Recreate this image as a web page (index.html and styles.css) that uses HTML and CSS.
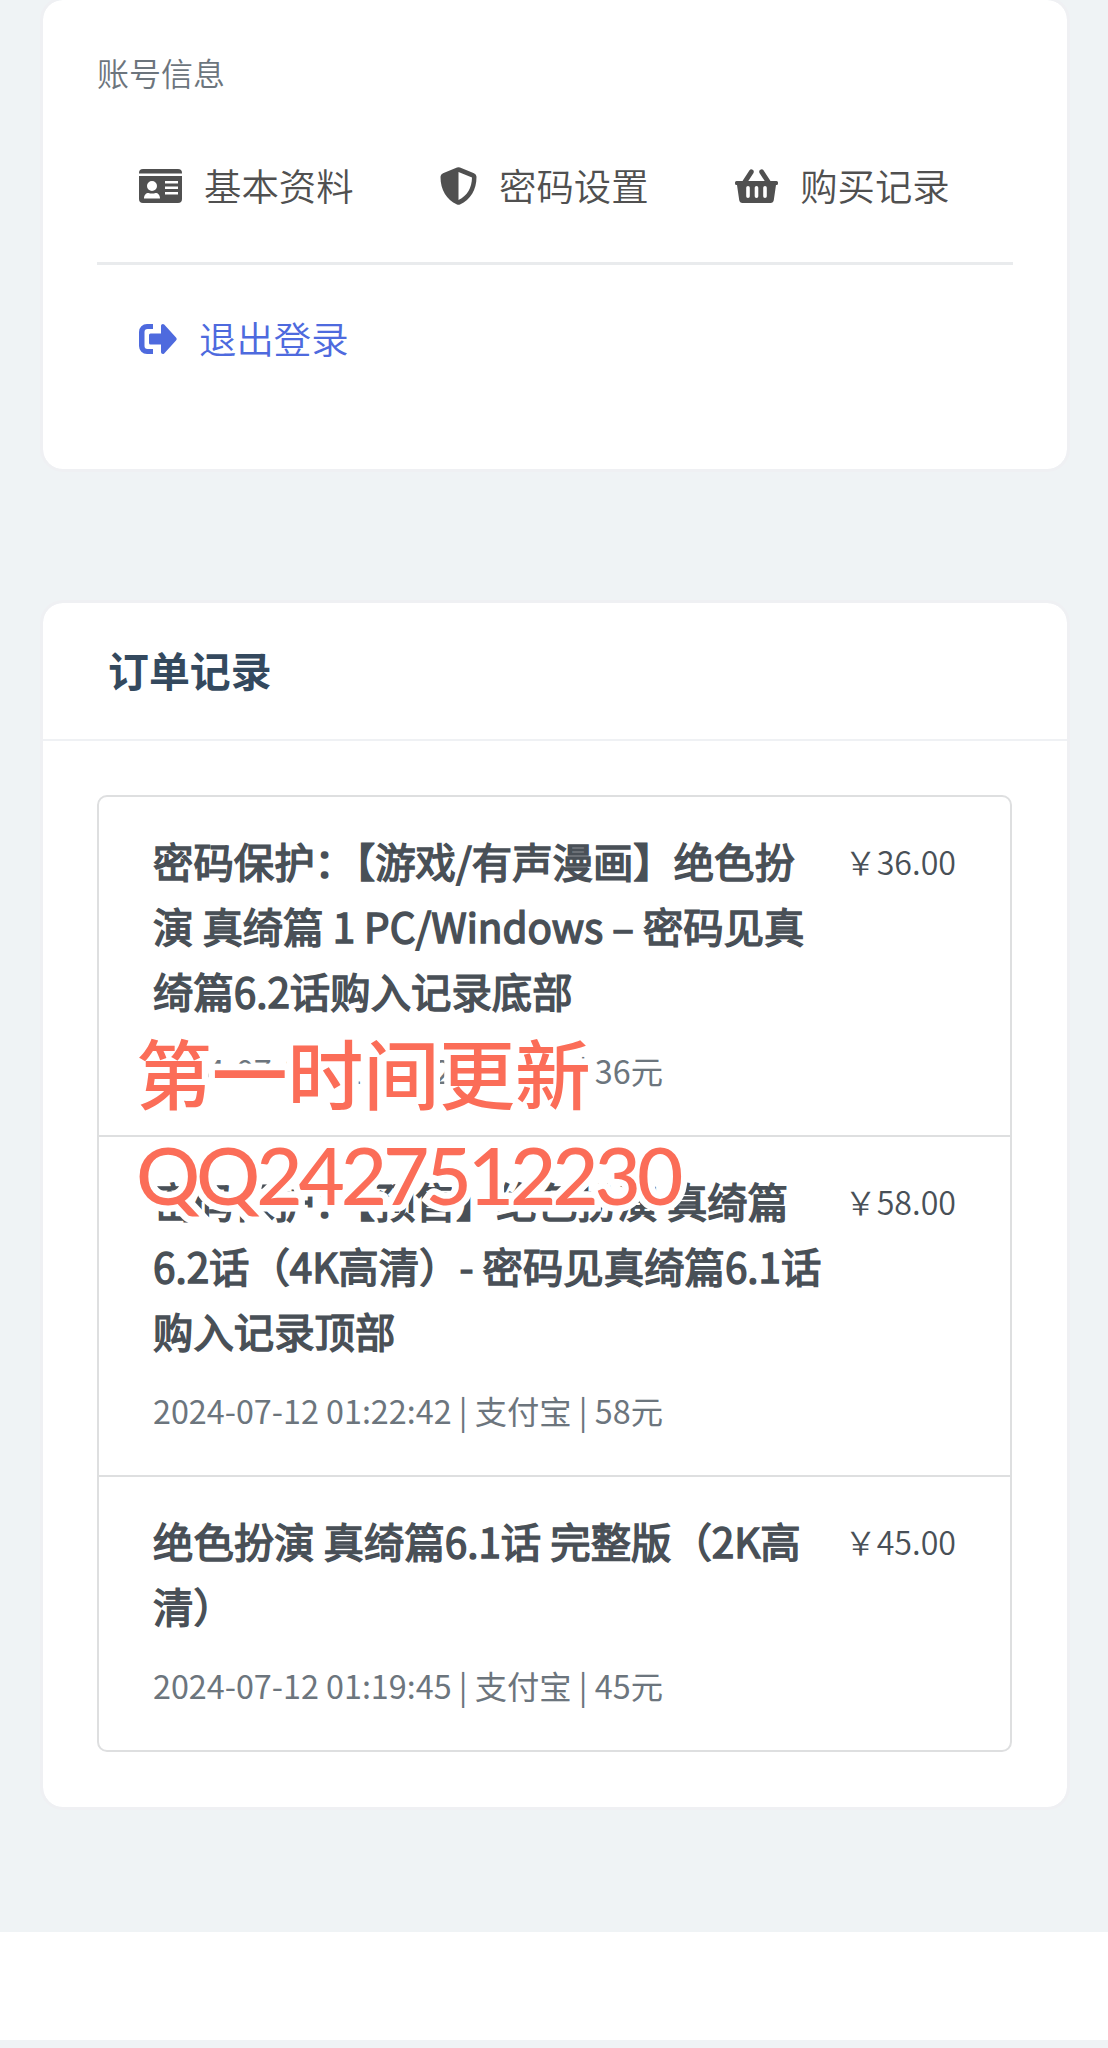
FILE: index.html
```html
<!DOCTYPE html>
<html lang="zh-CN">
<head>
    <meta charset="UTF-8">
    <meta name="viewport" content="width=device-width, initial-scale=1.0">
    <title>订单记录</title>
    <link rel="stylesheet" href="styles.css">
</head>
<body>
    <main class="page">
        <section class="card account">
            <h2 class="account-title">账号信息</h2>
            <nav class="account-nav">
                <a class="nav-item" href="#">
                    <svg width="43" height="34" viewBox="0 0 43 34" fill="currentColor">
                        <path d="M0 4.500V4a4 4 0 0 1 4-4h35a4 4 0 0 1 4 4v.5z"/>
                        <path fill-rule="evenodd" d="M0 7h43v23a4 4 0 0 1-4 4H4a4 4 0 0 1-4-4zM13 12a5 5 0 1 0 0 10 5 5 0 0 0 0-10zM5 29.500h16c0-3.500-2-5.500-4.500-5.500-2 .8-5 .8-7 0-2.500 0-4.500 2-4.500 5.500zM26 12v2.500h13V12zm0 5.500V20h13v-2.500zm0 5.500v2.500h13V23z"/>
                    </svg>
                    <span>基本资料</span>
                </a>
                <a class="nav-item" href="#">
                    <svg width="37" height="38" viewBox="0 0 37 38" fill="currentColor">
                        <path fill-rule="evenodd" d="M17 .5a4 4 0 0 1 3 0L34 6.200a4 4 0 0 1 2.500 3.800c0 13-6 22.500-16.500 27.500a3.500 3.500 0 0 1-3 0C6.500 32.500.5 23 .5 10A4 4 0 0 1 3 6.200zM18.500 5v28C27.500 28.500 31.800 21 32 10.500z"/>
                    </svg>
                    <span>密码设置</span>
                </a>
                <a class="nav-item" href="#">
                    <svg width="43" height="34" viewBox="0 0 43 34" fill="currentColor">
                        <path fill-rule="evenodd" d="M1.500 12h6L14.500 1.300a2.400 2.400 0 0 1 4 2.600L13.300 12h16.400L24.500 3.900a2.400 2.400 0 0 1 4-2.600L35.500 12h6a1.500 1.500 0 0 1 1.500 1.500v1a1.500 1.500 0 0 1-1.500 1.500H41l-2.200 15a3.500 3.500 0 0 1-3.500 3H7.700a3.500 3.500 0 0 1-3.500-3L2 16h-.5A1.500 1.500 0 0 1 0 14.500v-1A1.500 1.500 0 0 1 1.500 12zM13 17a1.800 1.800 0 0 0-1.800 1.800v8.500a1.800 1.800 0 0 0 3.600 0v-8.500A1.800 1.800 0 0 0 13 17zm8.500 0a1.800 1.800 0 0 0-1.800 1.800v8.500a1.800 1.800 0 0 0 3.600 0v-8.500a1.800 1.800 0 0 0-1.800-1.800zm8.500 0a1.800 1.800 0 0 0-1.800 1.800v8.500a1.800 1.800 0 0 0 3.600 0v-8.500A1.800 1.800 0 0 0 30 17z"/>
                    </svg>
                    <span>购买记录</span>
                </a>
            </nav>
            <a class="nav-item logout" href="#">
                <svg width="38" height="30" viewBox="0 0 38 30" fill="currentColor">
                    <path d="M14 0v5H8.500A3 3 0 0 0 5.500 8v14a3 3 0 0 0 3 3H14v5H8a8 8 0 0 1-8-8V8a8 8 0 0 1 8-8z"/>
                    <path d="M22 2c0-1.800 2-2.600 3.200-1.400L37 13.600a2 2 0 0 1 0 2.800L25.200 29.400C24 30.600 22 29.800 22 28v-7.500h-10.500a1.500 1.500 0 0 1-1.500-1.500v-8a1.500 1.500 0 0 1 1.500-1.500H22z"/>
                </svg>
                <span>退出登录</span>
            </a>
        </section>

        <section class="card orders">
            <h1 class="orders-title">订单记录</h1>
            <div class="order-list">
                <article class="order">
                    <div class="order-head">
                        <h3>密码保护：【游戏/有声漫画】绝色扮演 真绮篇 1 PC/Windows – 密码见真绮篇6.2话购入记录底部</h3>
                        <span class="price">￥36.00</span>
                    </div>
                    <p class="meta">2024-07-12 01:23:12 | 支付宝 | 36元</p>
                </article>
                <article class="order">
                    <div class="order-head">
                        <h3>密码保护：【预售】绝色扮演 真绮篇6.2话（4K高清）- 密码见真绮篇6.1话购入记录顶部</h3>
                        <span class="price">￥58.00</span>
                    </div>
                    <p class="meta">2024-07-12 01:22:42 | 支付宝 | 58元</p>
                </article>
                <article class="order">
                    <div class="order-head">
                        <h3>绝色扮演 真绮篇6.1话 完整版（2K高清）</h3>
                        <span class="price">￥45.00</span>
                    </div>
                    <p class="meta">2024-07-12 01:19:45 | 支付宝 | 45元</p>
                </article>
                <div class="watermark">
                    <div>第一时间更新</div>
                    <div class="watermark-qq">QQ2427512230</div>
                </div>
            </div>
        </section>
    </main>
    <footer class="footer"></footer>
</body>
</html>
```

FILE: styles.css
```css
* {
    box-sizing: border-box;
}
body {
    margin: 0;
    font-family: "Noto Sans CJK SC", sans-serif;
    font-weight: 350;
    background-color: #eff3f5;
    color: #495057;
}
h1, h2, h3, p {
    margin: 0;
}
.page {
    height: 1935px;
    padding: 0 38px 0 40px;
}
.card {
    background-color: #fff;
    border: 3px solid #eff0f3;
    border-radius: 23px;
    background-clip: padding-box;
}
.account {
    height: 475px;
    margin-top: -3px;
    padding: 48px 54px 0;
}
.account-title {
    font-size: 32px;
    line-height: 48px;
    font-weight: 350;
    color: #6c757d;
}
.account-nav {
    display: flex;
    height: 169px;
    padding: 63px 0 0 42px;
    border-bottom: 3px solid #e9ebed;
}
.nav-item {
    display: flex;
    align-items: center;
    height: 56px;
    font-size: 37.400px;
    color: #505050;
    text-decoration: none;
}
.nav-item svg {
    margin: 0 22px 2px 0;
}
.nav-item span {
    margin-top: -4px;
}
.account-nav .nav-item + .nav-item {
    margin-left: 86.500px;
}
.logout {
    margin: 47px 0 0 42px;
    color: #4e6ade;
}
.orders {
    height: 1210px;
    margin-top: 128px;
}
.orders-title {
    height: 138px;
    padding: 37px 65px 0;
    font-size: 40.900px;
    line-height: 60px;
    color: #34495e;
    border-bottom: 2px solid #eff1f4;
}
.order-list {
    position: relative;
    margin: 54px 55px 0 54px;
    border: 2px solid #dedfe0;
    border-radius: 10px;
}
.order {
    padding: 31px 54px 40px;
}
.order + .order {
    border-top: 2px solid #dedfe0;
}
.order-head {
    display: flex;
    justify-content: space-between;
}
/* regular cut thickened by a stroke, keeps the narrow latin widths */
.order h3 {
    width: 680px;
    font-size: 40.400px;
    line-height: 65px;
    font-weight: 400;
    -webkit-text-stroke: 1.500px currentColor;
}
.price {
    padding-top: 1px;
    font-size: 32.200px;
    line-height: 64px;
}
.meta {
    margin-top: 22px;
    font-size: 32.300px;
    font-weight: 400;
    line-height: 50px;
    color: #6c757d;
}
.watermark {
    position: absolute;
    top: 223px;
    left: 37px;
    font-size: 75.800px;
    line-height: 103px;
    font-weight: 500;
    color: #fb6d58;
    white-space: nowrap;
    -webkit-text-stroke: 13px #fff;
    paint-order: stroke fill;
}
.watermark-qq {
    font-family: Lato, sans-serif;
    font-size: 80px;
    letter-spacing: -4.100px;
}
.footer {
    height: 108px;
    background-color: #fff;
}
```
